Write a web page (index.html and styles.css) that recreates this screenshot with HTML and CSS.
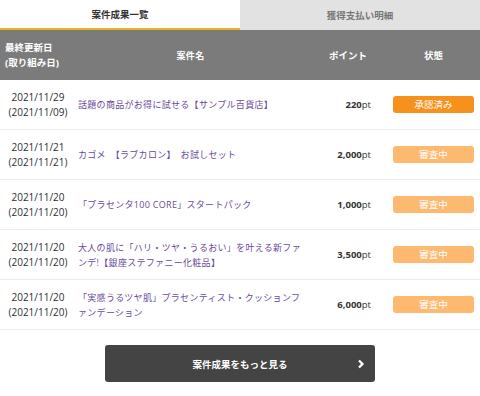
FILE: index.html
```html
<!DOCTYPE html>
<html lang="ja">
<head>
    <meta charset="UTF-8">
    <title>案件成果一覧</title>
    <link rel="stylesheet" href="styles.css">
</head>
<body>
    <div class="tabs">
        <div class="tab active">案件成果一覧</div>
        <div class="tab">獲得支払い明細</div>
    </div>

    <div class="table">
        <div class="row head">
            <div class="c-date">最終更新日<br>(取り組み日)</div>
            <div class="c-name">案件名</div>
            <div class="c-pt">ポイント</div>
            <div class="c-st">状態</div>
        </div>
        <div class="row">
            <div class="c-date">2021/11/29<br>(2021/11/09)</div>
            <div class="c-name"><a href="#">話題の商品がお得に試せる【サンプル百貨店】</a></div>
            <div class="c-pt"><b>220</b>pt</div>
            <div class="c-st"><span class="badge done">承認済み</span></div>
        </div>
        <div class="row">
            <div class="c-date">2021/11/21<br>(2021/11/21)</div>
            <div class="c-name"><a href="#">カゴメ　【ラブカロン】　お試しセット</a></div>
            <div class="c-pt"><b>2,000</b>pt</div>
            <div class="c-st"><span class="badge">審査中</span></div>
        </div>
        <div class="row">
            <div class="c-date">2021/11/20<br>(2021/11/20)</div>
            <div class="c-name"><a href="#">「プラセンタ100 CORE」スタートパック</a></div>
            <div class="c-pt"><b>1,000</b>pt</div>
            <div class="c-st"><span class="badge">審査中</span></div>
        </div>
        <div class="row">
            <div class="c-date">2021/11/20<br>(2021/11/20)</div>
            <div class="c-name"><a href="#">大人の肌に「ハリ・ツヤ・うるおい」を叶える新ファンデ!【銀座ステファニー化粧品】</a></div>
            <div class="c-pt"><b>3,500</b>pt</div>
            <div class="c-st"><span class="badge">審査中</span></div>
        </div>
        <div class="row">
            <div class="c-date">2021/11/20<br>(2021/11/20)</div>
            <div class="c-name"><a href="#">「実感うるツヤ肌」プラセンティスト・クッションファンデーション</a></div>
            <div class="c-pt"><b>6,000</b>pt</div>
            <div class="c-st"><span class="badge">審査中</span></div>
        </div>
    </div>

    <div class="more-wrap">
        <a href="#" class="more">案件成果をもっと見る
            <svg class="chev" width="8" height="10" viewBox="0 0 8 10"><path d="M2 1.5 L5.5 5 L2 8.5" fill="none" stroke="#fff" stroke-width="2.2"/></svg>
        </a>
    </div>
</body>
</html>
```

FILE: styles.css
```css
body {
    margin: 0;
    background: #fff;
    font-family: "Open Sans", "Noto Sans CJK JP", sans-serif;
    color: #333;
    width: 480px;
}
.tabs {
    display: flex;
    height: 30px;
}
.tab {
    flex: 1;
    display: flex;
    align-items: center;
    justify-content: center;
    font-size: 9.5px;
    font-weight: bold;
    color: #777;
    background: #e2e2e2;
    box-sizing: border-box;
}
.tab.active {
    background: #fff;
    color: #333;
    border-bottom: 2px solid #e6b422;
}
.row {
    display: grid;
    grid-template-columns: 76px 229px 70px 105px;
    align-items: center;
    height: 50px;
    border-bottom: 1px solid #ebebeb;
    box-sizing: border-box;
}
.row.head {
    background: #7b7b7b;
    color: #fff;
    font-weight: bold;
    font-size: 9.5px;
    border-bottom: none;
}
.c-date {
    font-size: 10px;
    line-height: 15px;
    text-align: center;
    color: #2e2e2e;
}
.head .c-date {
    text-align: left;
    padding-left: 5px;
    font-size: 9.5px;
    font-weight: bold;
    color: #fff;
}
.c-name {
    padding-left: 2px;
    font-size: 9px;
    letter-spacing: 0.3px;
    line-height: 15px;
}
.head .c-name {
    text-align: center;
    padding-left: 0;
}
.c-name a {
    color: #6a4a9c;
    text-decoration: none;
}
.c-pt {
    text-align: right;
    padding-right: 4px;
    font-size: 9.5px;
}
.head .c-pt {
    padding-right: 8px;
}
.c-st {
    padding: 0 6px 0 18px;
    text-align: center;
}
.badge {
    display: block;
    height: 17px;
    line-height: 17px;
    border-radius: 3px;
    background: #fdb96f;
    color: #fff;
    font-size: 9.5px;
}
.badge.done {
    background: #f7911d;
}
.more-wrap {
    padding-top: 15px;
    display: flex;
    justify-content: center;
}
.more {
    position: relative;
    width: 270px;
    height: 37px;
    border-radius: 3px;
    background: #444;
    color: #fff;
    font-size: 9.5px;
    font-weight: bold;
    text-decoration: none;
    display: flex;
    align-items: center;
    justify-content: center;
}
.chev {
    position: absolute;
    right: 10px;
    top: 14px;
}
```
